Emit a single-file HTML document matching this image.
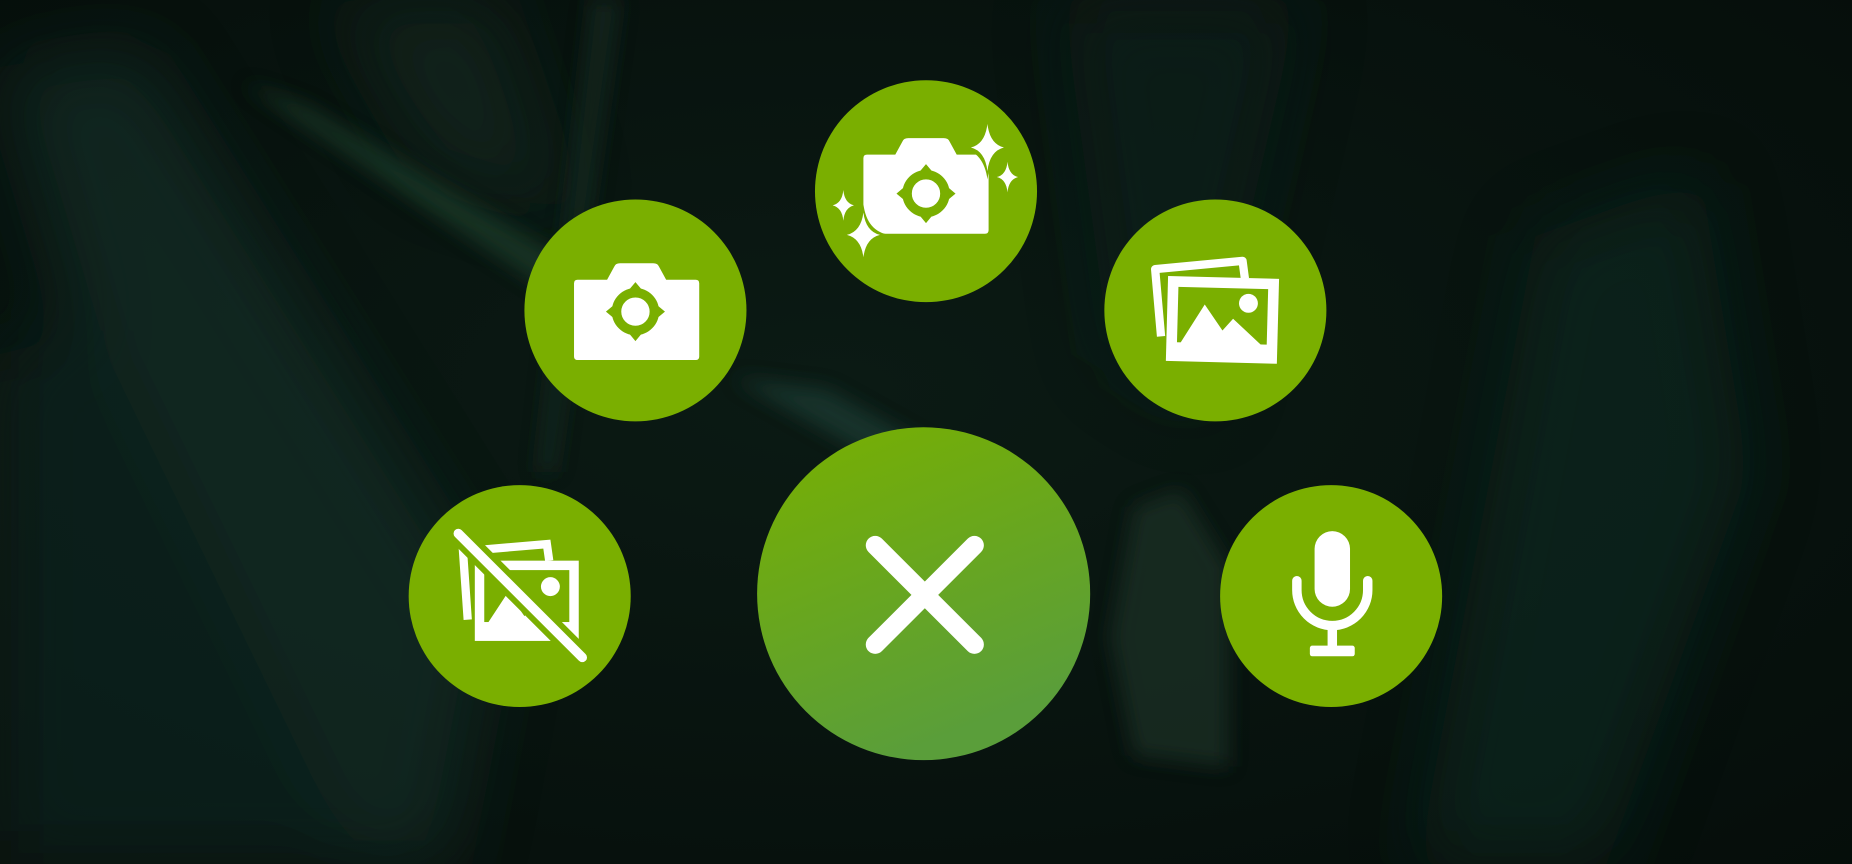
<!DOCTYPE html>
<html><head><meta charset="utf-8"><style>
html,body{margin:0;padding:0;width:1852px;height:864px;overflow:hidden;background:#07120e}
svg{display:block}
</style></head><body>
<svg width="1852" height="864" viewBox="0 0 1568 732" preserveAspectRatio="none" xmlns="http://www.w3.org/2000/svg">
<defs>
<radialGradient id="bg" cx="0.45" cy="0.45" r="0.8">
<stop offset="0" stop-color="#0b1a14"/><stop offset="1" stop-color="#050d0a"/>
</radialGradient>
<linearGradient id="xg" x1="0" y1="0" x2="0.4" y2="1">
<stop offset="0" stop-color="#78b000"/><stop offset="1" stop-color="#5a9e3a"/>
</linearGradient>
<filter id="bl" x="-100%" y="-100%" width="300%" height="300%"><feGaussianBlur stdDeviation="30"/></filter>
<filter id="bl2" x="-100%" y="-100%" width="300%" height="300%"><feGaussianBlur stdDeviation="8"/></filter>
</defs>
<rect width="1568" height="732" fill="url(#bg)"/>
<g filter="url(#bl)" opacity="0.6">
<path d="M0 60 L120 40 L420 520 L380 732 L200 732 Z" fill="#12302a"/>
<path d="M0 300 L80 280 L300 732 L0 732 Z" fill="#0f2620"/>
<path d="M1300 200 L1440 150 L1480 400 L1360 732 L1200 732 Z" fill="#0f2a24"/>
<path d="M900 0 L1100 0 L1020 350 L940 300 Z" fill="#10231c"/>
<path d="M280 0 L420 0 L480 180 L360 140 Z" fill="#142a22"/>
</g>
<g filter="url(#bl2)" opacity="0.7">
<path d="M205 70 L260 90 L480 220 L470 250 L380 190 Z" fill="#1c3d2c"/>
<path d="M620 320 L700 330 L790 380 L760 400 Z" fill="#1e3c34"/>
<path d="M960 430 L1000 415 L1040 480 L1040 650 L960 640 L940 540 Z" fill="#1a3328"/>
<path d="M500 0 L525 0 L470 400 L455 400 Z" fill="#132a20"/>
</g>
<circle cx="784" cy="162" r="94" fill="#7aaf00"/>
<circle cx="538" cy="263" r="94" fill="#7aaf00"/>
<circle cx="1029" cy="263" r="94" fill="#7aaf00"/>
<circle cx="440" cy="505" r="94" fill="#7aaf00"/>
<circle cx="1127" cy="505" r="94" fill="#7aaf00"/>
<circle cx="782" cy="503" r="141" fill="url(#xg)"/>
<!-- camera left -->
<g>
<path d="M514 237 L520 226 Q521 223 525 223 L553 223 Q557 223 558 226 L564 237 L589 237 Q592 237 592 240 L592 302 Q592 305 589 305 L489 305 Q486 305 486 302 L486 240 Q486 237 489 237 Z" fill="#fff"/>
<circle cx="538" cy="264" r="16" fill="none" stroke="#7aaf00" stroke-width="8"/>
<path d="M538 239 l5 6 h-10 Z M538 289 l5 -6 h-10 Z M513 264 l6 5 v-10 Z M563 264 l-6 5 v-10 Z" fill="#7aaf00"/>
</g>
<!-- camera sparkle -->
<g>
<path d="M758 131 L764 120 Q765 117 769 117 L799 117 Q803 117 804 120 L810 131 L834 131 Q837 131 837 134 L837 195 Q837 198 834 198 L734 198 Q731 198 731 195 L731 134 Q731 131 734 131 Z" fill="#fff"/>
<circle cx="784" cy="164" r="16" fill="none" stroke="#7aaf00" stroke-width="8"/>
<path d="M784 139 l5 6 h-10 Z M784 189 l5 -6 h-10 Z M759 164 l6 5 v-10 Z M809 164 l-6 5 v-10 Z" fill="#7aaf00"/>
<path d="M836 98 Q839 121 858 125 Q839 129 836 152 Q833 129 814 125 Q833 121 836 98Z" fill="#7aaf00"/>
<path d="M836 105 Q838 122 850 125 Q838 128 836 145 Q834 128 822 125 Q834 122 836 105Z" fill="#fff"/>
<path d="M853 137 Q854 148 862 150 Q854 152 853 163 Q852 152 844 150 Q852 148 853 137Z" fill="#fff"/>
<path d="M714 161 Q715 172 723 174 Q715 176 714 187 Q713 176 705 174 Q713 172 714 161Z" fill="#fff"/>
<path d="M731 173 Q734 196 753 199 Q734 202 731 225 Q728 202 709 199 Q728 196 731 173Z" fill="#7aaf00"/>
<path d="M731 180 Q733 196 745 199 Q733 202 731 218 Q729 202 717 199 Q729 196 731 180Z" fill="#fff"/>
</g>
<!-- gallery -->
<g>
<path d="M983 285 L978 228 L1052 221 L1054 236" fill="none" stroke="#fff" stroke-width="7" stroke-linejoin="round"/>
<rect x="988" y="235" width="94" height="72" fill="#fff" transform="rotate(1.5 1035 271)"/>
<rect x="997" y="244" width="76" height="47" fill="#7aaf00" transform="rotate(1.5 1035 271)"/>
<path d="M994 299 L1020 258 L1035 280 L1044 270 L1077 301 Z" fill="#fff"/>
<circle cx="1057" cy="257" r="8" fill="#fff"/>
</g>
<!-- no gallery -->
<g>
<path d="M396 525 L392 467 L463 461 L465 475" fill="none" stroke="#fff" stroke-width="7"/>
<rect x="402" y="475" width="88" height="68" fill="#fff"/>
<rect x="410" y="483" width="72" height="44" fill="#7aaf00"/>
<path d="M407 537 L430 502 L444 522 L452 513 L485 539 Z" fill="#fff"/>
<circle cx="466" cy="497" r="8" fill="#fff"/>
<line x1="388" y1="452" x2="493" y2="557" stroke="#7aaf00" stroke-width="18" stroke-linecap="round"/>
<line x1="388" y1="452" x2="493" y2="557" stroke="#fff" stroke-width="8" stroke-linecap="round"/>
</g>
<!-- X -->
<path d="M741 462 L825 546 M825 462 L741 546" stroke="#fff" stroke-width="16" stroke-linecap="round"/>
<!-- mic -->
<g>
<rect x="1113" y="450" width="30" height="64" rx="15" fill="#fff"/>
<path d="M1098 492 v8 a30 30 0 0 0 60 0 v-8" fill="none" stroke="#fff" stroke-width="8" stroke-linecap="round"/>
<path d="M1128 530 v20" stroke="#fff" stroke-width="8"/>
<rect x="1109" y="547" width="38" height="9" rx="2" fill="#fff"/>
</g>
</svg>
</body></html>
